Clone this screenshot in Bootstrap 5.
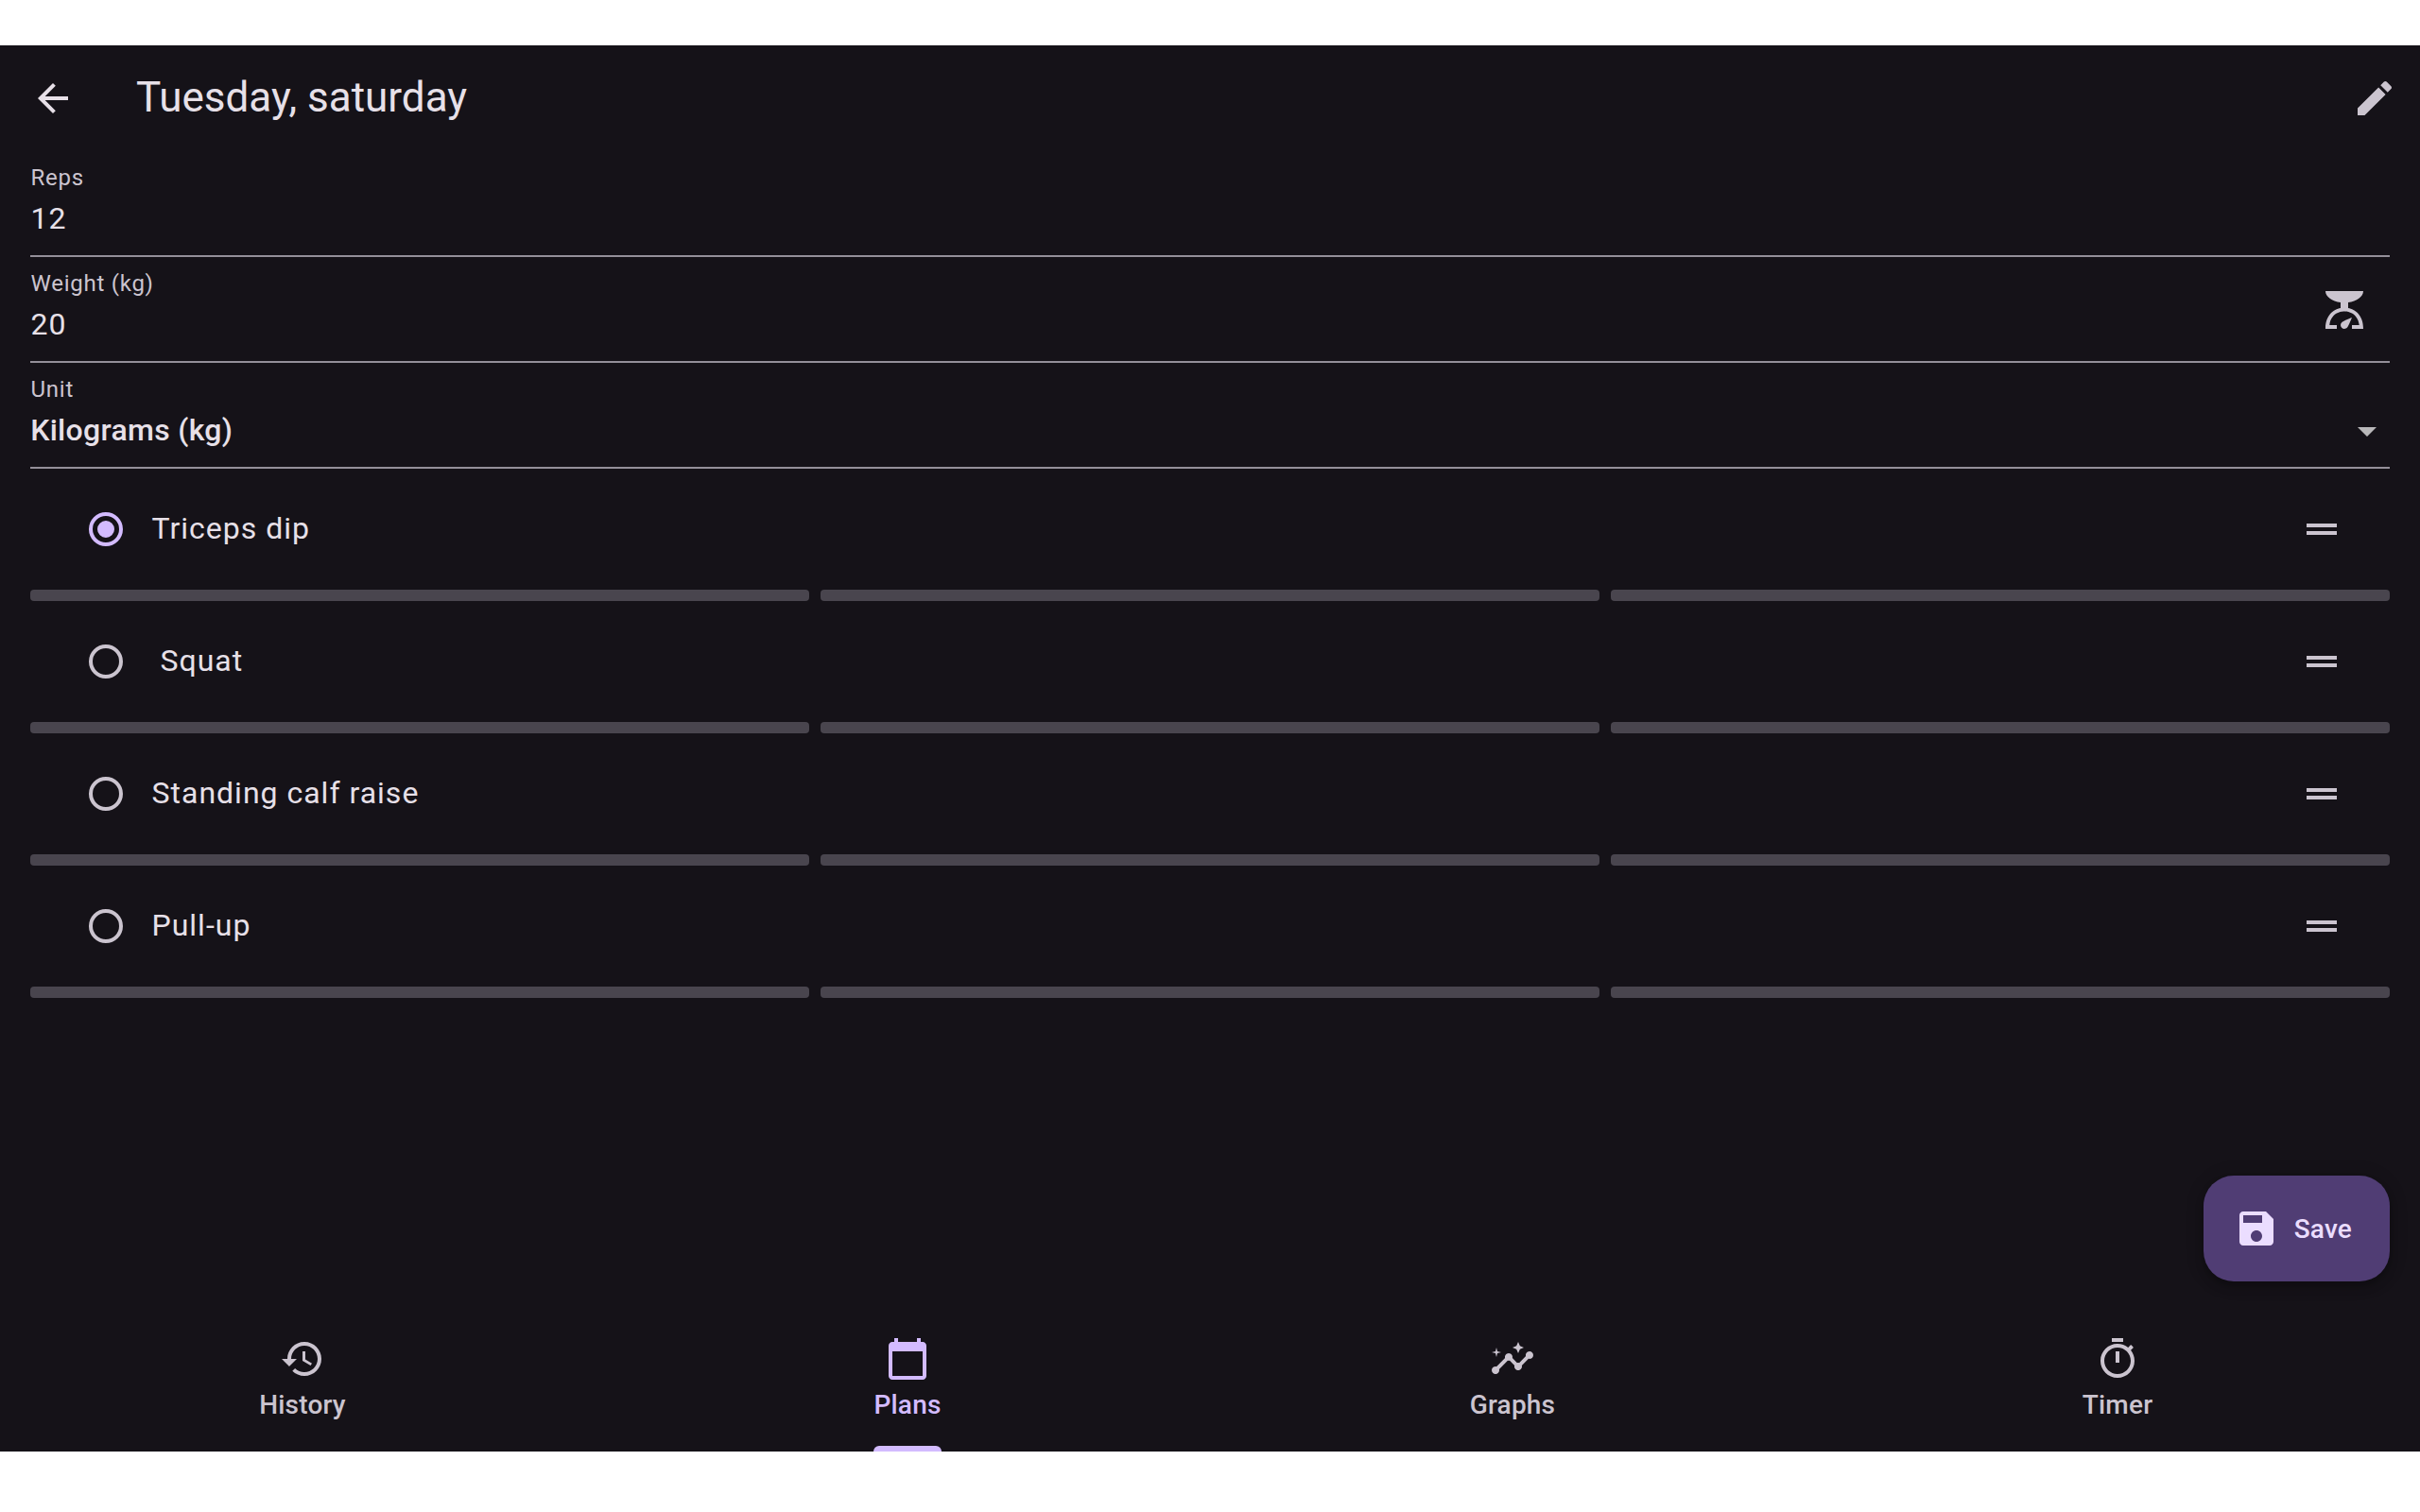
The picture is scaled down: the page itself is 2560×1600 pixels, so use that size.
<!DOCTYPE html>
<html lang="en" data-bs-theme="dark">
<head>
<meta charset="utf-8">
<meta name="viewport" content="width=device-width, initial-scale=1">
<title>Tuesday, saturday</title>
<link href="https://cdn.jsdelivr.net/npm/bootstrap@5.3.0/dist/css/bootstrap.min.css" rel="stylesheet">
<style>
:root {
  --surface: #151218; --on-surface: #e7e0e8; --on-variant: #cbc4cf;
  --outline: #948f99; --track: #49454e; --accent: #d3bbff;
  --accent-box: #503d74; --on-accent-box: #ebddff;
}
body { background: #fff; font-family: Roboto, sans-serif; padding: 48px 0 64px; }
svg { width: 48px; height: 48px; fill: currentColor; flex: none; display: block; }
.app { height: 1488px; background: var(--surface); color: var(--on-surface); }
.topbar { height: 112px; padding: 0 24px 0 32px; }
.topbar h1 { font-size: 44px; line-height: 56px; font-weight: 400; margin: 0 0 2px 64px; color: var(--on-surface); }
.soft { color: var(--on-variant); }
.content { padding: 0 32px; }
.field { height: 112px; border-bottom: 2px solid var(--outline); }
.field-label { font-size: 24px; line-height: 24px; letter-spacing: .75px; text-indent: .5px; color: var(--on-variant); padding-top: 16px; margin-bottom: 7px; }
.field-value { font-size: 32px; line-height: 48px; letter-spacing: 1px; text-indent: .5px; }
.field-value.unit { font-weight: 500; letter-spacing: .3px; text-indent: .15px; }
.scale-btn { padding: 32px 24px 0 0; }
.caret { color: #b9b8ba; padding-top: 48px; }
.exercise { height: 128px; padding: 0 48px 0 56px; gap: 24px; }
.exercise-name { font-size: 32px; line-height: 48px; letter-spacing: 1px; text-indent: .5px; white-space: pre; margin-bottom: 2px; }
.selected { color: var(--accent); }
.sets { gap: 12px; height: 12px; }
.sets > div { background: var(--track); border-radius: 4px; }
.save-btn, .save-btn:hover { height: 112px; border: 0; border-radius: 32px; padding: 0 40px 0 32px; gap: 16px; margin: 0 32px 36px 0; background: var(--accent-box); color: var(--on-accent-box); font-size: 28px; line-height: 40px; font-weight: 500; letter-spacing: .2px; box-shadow: 0 6px 10px rgba(0,0,0,.22), 0 2px 20px rgba(0,0,0,.16); }
.save-btn span { padding-top: 2px; }
.tabs { height: 144px; }
.tabs .nav-link { height: 144px; padding: 22px 0 0; color: var(--on-variant); font-size: 28px; line-height: 40px; font-weight: 500; letter-spacing: .2px; }
.tabs .nav-link.active { color: var(--accent); }
.tabs span { margin-top: 5px; }
.indicator { width: 72px; height: 6px; background: var(--accent); border-radius: 6px 6px 0 0; }
</style>
<script src="https://cdn.jsdelivr.net/npm/bootstrap@5.3.0/dist/js/bootstrap.bundle.min.js"></script>
</head>
<body>
<svg class="d-none" viewBox="0 0 24 24">
  <symbol id="on" viewBox="0 0 24 24"><path d="M12 7.5a4.5 4.5 0 1 0 0 9 4.5 4.5 0 0 0 0-9zM12 3a9 9 0 1 0 0 18 9 9 0 0 0 0-18zm0 16a7 7 0 1 1 0-14 7 7 0 0 1 0 14z"/></symbol>
  <symbol id="off" viewBox="0 0 24 24"><path d="M12 3a9 9 0 1 0 0 18 9 9 0 0 0 0-18zm0 16a7 7 0 1 1 0-14 7 7 0 0 1 0 14z"/></symbol>
  <symbol id="drag" viewBox="0 0 24 24"><path d="M20 9H4v2h16V9zM4 15h16v-2H4v2z"/></symbol>
</svg>
<div class="app d-flex flex-column">
  <header class="topbar d-flex align-items-center">
    <svg viewBox="0 0 24 24"><path d="M20 11H7.83l5.59-5.59L12 4l-8 8 8 8 1.41-1.41L7.83 13H20v-2z"/></svg>
    <h1>Tuesday, saturday</h1>
    <svg class="ms-auto soft" viewBox="0 0 24 24"><path d="M3 17.25V21h3.75L17.81 9.94l-3.75-3.75L3 17.25zM20.71 7.04c.39-.39.39-1.02 0-1.41l-2.34-2.34c-.39-.39-1.02-.39-1.41 0l-1.83 1.83 3.75 3.75 1.83-1.83z"/></svg>
  </header>
  <main class="content">
    <div class="field"><div class="field-label">Reps</div><div class="field-value">12</div></div>
    <div class="field d-flex justify-content-between">
      <div><div class="field-label">Weight (kg)</div><div class="field-value">20</div></div>
      <div class="scale-btn soft"><svg viewBox="0 0 24 24"><path d="M14 11V8c4.56-.58 8-3.1 8-6H2c0 2.9 3.44 5.42 8 6v3c-3.68.73-8 3.61-8 11h6v-2H4.13c.93-6.83 6.65-7.2 7.87-7.2s6.94.37 7.87 7.2H16v2h6c0-7.39-4.32-10.27-8-11z"/><path d="M10 20c0-.55.22-1.05.59-1.41C11.39 17.79 16 16 16 16s-1.79 4.61-2.59 5.41c-.36.37-.86.59-1.41.59-1.1 0-2-.9-2-2z"/></svg></div>
    </div>
    <div class="field d-flex justify-content-between">
      <div><div class="field-label">Unit</div><div class="field-value unit">Kilograms (kg)</div></div>
      <div class="caret"><svg viewBox="0 0 24 24"><path d="M7 10l5 5 5-5z"/></svg></div>
    </div>

    <div class="exercise d-flex align-items-center"><svg class="selected"><use href="#on"/></svg><div class="exercise-name">Triceps dip</div><svg class="soft ms-auto"><use href="#drag"/></svg></div>
    <div class="sets d-flex"><div class="flex-fill"></div><div class="flex-fill"></div><div class="flex-fill"></div></div>
    <div class="exercise d-flex align-items-center"><svg class="soft"><use href="#off"/></svg><div class="exercise-name"> Squat</div><svg class="soft ms-auto"><use href="#drag"/></svg></div>
    <div class="sets d-flex"><div class="flex-fill"></div><div class="flex-fill"></div><div class="flex-fill"></div></div>
    <div class="exercise d-flex align-items-center"><svg class="soft"><use href="#off"/></svg><div class="exercise-name">Standing calf raise</div><svg class="soft ms-auto"><use href="#drag"/></svg></div>
    <div class="sets d-flex"><div class="flex-fill"></div><div class="flex-fill"></div><div class="flex-fill"></div></div>
    <div class="exercise d-flex align-items-center"><svg class="soft"><use href="#off"/></svg><div class="exercise-name">Pull-up</div><svg class="soft ms-auto"><use href="#drag"/></svg></div>
    <div class="sets d-flex"><div class="flex-fill"></div><div class="flex-fill"></div><div class="flex-fill"></div></div>
  </main>
  <button type="button" class="save-btn btn d-flex align-items-center align-self-end mt-auto">
    <svg viewBox="0 0 24 24"><path d="M17 3H5c-1.11 0-2 .9-2 2v14c0 1.1.89 2 2 2h14c1.1 0 2-.9 2-2V7l-4-4zm-5 16c-1.66 0-3-1.34-3-3s1.34-3 3-3 3 1.34 3 3-1.34 3-3 3zm3-10H5V5h10v4z"/></svg>
    <span>Save</span>
  </button>
  <nav class="tabs nav nav-fill flex-nowrap">
    <a class="nav-link w-25 d-flex flex-column align-items-center" href="#"><svg viewBox="0 0 24 24"><path d="M13 3c-4.97 0-9 4.03-9 9H1l3.89 3.89.07.14L9 12H6c0-3.87 3.13-7 7-7s7 3.13 7 7-3.13 7-7 7c-1.93 0-3.68-.79-4.94-2.06l-1.42 1.42C8.27 19.99 10.51 21 13 21c4.97 0 9-4.03 9-9s-4.03-9-9-9zm-1 5v5l4.28 2.54.72-1.21-3.5-2.08V8H12z"/></svg><span>History</span></a>
    <a class="nav-link active w-25 d-flex flex-column align-items-center" href="#"><svg viewBox="0 0 24 24"><path d="M20 3h-1V1h-2v2H7V1H5v2H4c-1.1 0-2 .9-2 2v16c0 1.1.9 2 2 2h16c1.1 0 2-.9 2-2V5c0-1.1-.9-2-2-2zm0 18H4V8h16v13z"/></svg><span>Plans</span><div class="indicator mt-auto"></div></a>
    <a class="nav-link w-25 d-flex flex-column align-items-center" href="#"><svg viewBox="0 0 24 24"><path d="M21 8c-1.45 0-2.26 1.44-1.93 2.51l-3.55 3.56c-.3-.09-.74-.09-1.04 0l-2.55-2.55C12.27 10.45 11.46 9 10 9c-1.45 0-2.27 1.44-1.93 2.52l-4.56 4.55C2.44 15.74 1 16.55 1 18c0 1.1.9 2 2 2 1.45 0 2.26-1.44 1.93-2.51l4.55-4.56c.3.09.74.09 1.04 0l2.55 2.55C12.73 16.55 13.54 18 15 18c1.45 0 2.27-1.44 1.93-2.52l3.56-3.55C21.56 12.26 23 11.45 23 10c0-1.1-.9-2-2-2z"/><path d="M15 9l.94-2.07L18 6l-2.06-.93L15 3l-.92 2.07L12 6l2.08.93zM3.5 11L4 9l2-.5L4 8l-.5-2L3 8l-2 .5L3 9z"/></svg><span>Graphs</span></a>
    <a class="nav-link w-25 d-flex flex-column align-items-center" href="#"><svg viewBox="0 0 24 24"><path d="M15 1H9v2h6V1zm-4 13h2V8h-2v6zm8.03-6.61l1.42-1.42c-.43-.51-.9-.99-1.41-1.41l-1.42 1.42C16.07 4.74 14.12 4 12 4c-4.97 0-9 4.03-9 9s4.02 9 9 9 9-4.03 9-9c0-2.12-.74-4.07-1.97-5.61zM12 20c-3.87 0-7-3.13-7-7s3.13-7 7-7 7 3.13 7 7-3.13 7-7 7z"/></svg><span>Timer</span></a>
  </nav>
</div>
</body>
</html>
